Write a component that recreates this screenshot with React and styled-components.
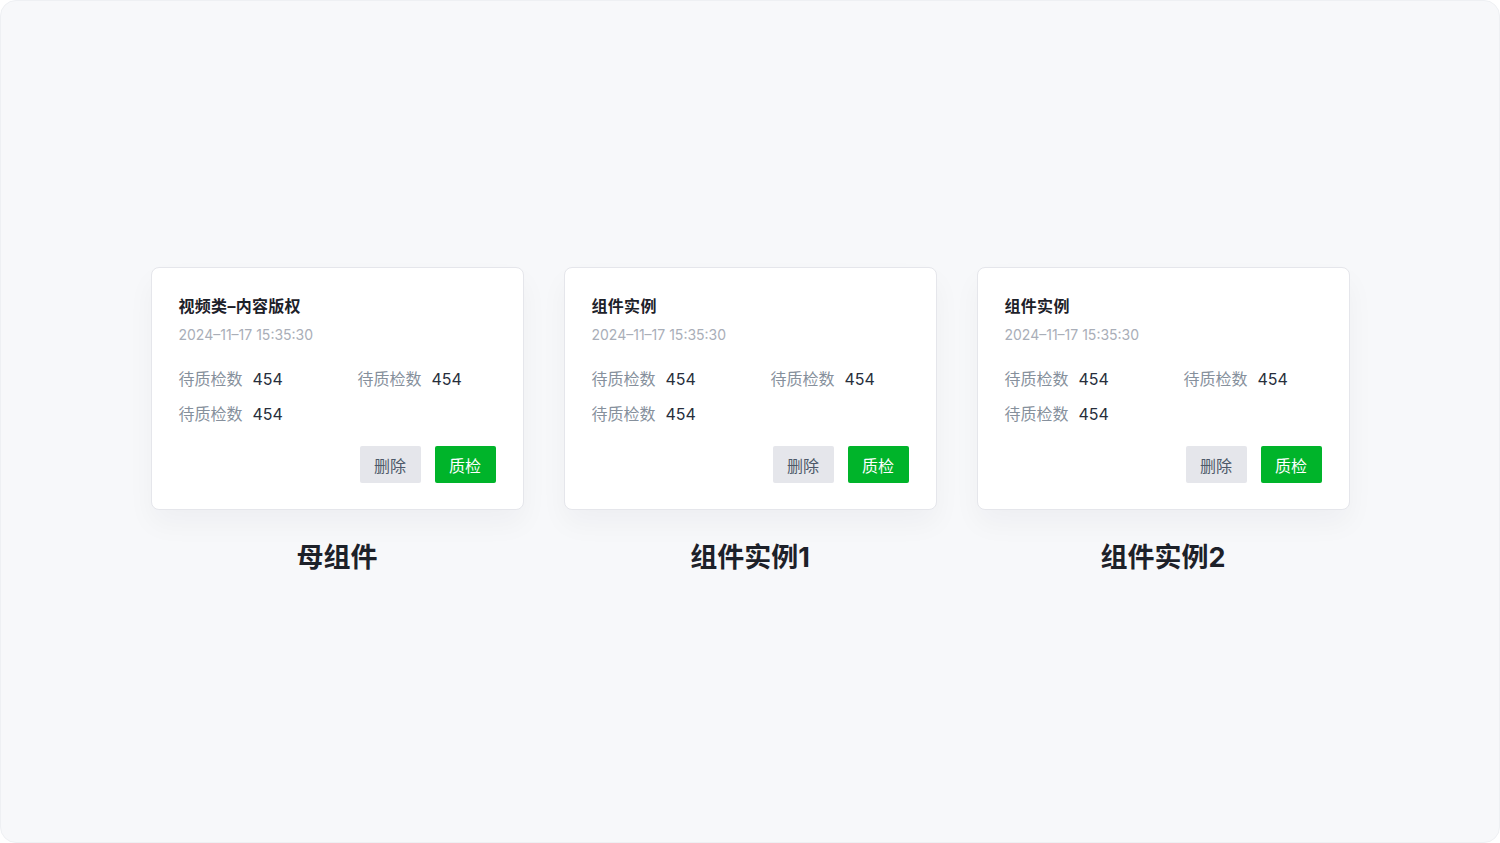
import React from 'react';
import styled, { createGlobalStyle } from 'styled-components';

const GlobalStyle = createGlobalStyle`
  html, body {
    margin: 0;
    padding: 0;
    background: #ffffff;
  }
  * {
    box-sizing: border-box;
  }
  body {
    font-family: "Inter", "Noto Sans CJK SC", sans-serif;
  }
`;

const Frame = styled.div`
  width: 1500px;
  height: 843px;
  background: #f7f8fa;
  border: 1px solid #eef0f3;
  border-radius: 16px;
  display: flex;
  justify-content: center;
  align-items: flex-start;
  gap: 40px;
  padding-top: 266px;
`;

const Column = styled.div`
  display: flex;
  flex-direction: column;
  align-items: center;
`;

const Card = styled.div`
  width: 373px;
  background: #ffffff;
  border: 1px solid #e5e6eb;
  border-radius: 8px;
  padding: 26px 27px 26px 27px;
  box-shadow: 0 14px 28px rgba(29, 33, 41, 0.04);
  display: flex;
  flex-direction: column;
`;

const Title = styled.div`
  font-size: 16px;
  line-height: 24px;
  font-weight: 700;
  color: #1d2129;
  letter-spacing: 0.3px;
`;

const Time = styled.div`
  margin-top: 6px;
  font-size: 14px;
  line-height: 22px;
  color: #a9aeb8;
`;

const Stats = styled.div`
  margin-top: 21px;
  display: grid;
  grid-template-columns: 179px 1fr;
  row-gap: 11px;
`;

const Stat = styled.div`
  display: flex;
  align-items: center;
  gap: 10px;
  font-size: 16px;
  line-height: 24px;
`;

const StatLabel = styled.span`
  color: #86909c;
`;

const StatValue = styled.span`
  color: #272e3b;
`;

const Actions = styled.div`
  margin-top: 20px;
  display: flex;
  justify-content: flex-end;
  gap: 14px;
`;

const Button = styled.button`
  width: 61px;
  height: 37px;
  border: none;
  border-radius: 2px;
  font-family: inherit;
  font-size: 16px;
  padding: 0;
  cursor: pointer;
  background: ${(p) => (p.$primary ? '#00b42a' : '#e5e6eb')};
  color: ${(p) => (p.$primary ? '#ffffff' : '#4e5969')};
`;

const Caption = styled.div`
  margin-top: 30px;
  font-size: 27px;
  line-height: 36px;
  font-weight: 700;
  color: #1d2129;
`;

const cards = [
  { title: '视频类–内容版权', caption: '母组件' },
  { title: '组件实例', caption: '组件实例1' },
  { title: '组件实例', caption: '组件实例2' },
];

const stats = ['待质检数', '待质检数', '待质检数'];

const TaskCard = ({ title }) => (
  <Card>
    <Title>{title}</Title>
    <Time>2024–11–17 15:35:30</Time>
    <Stats>
      {stats.map((label, i) => (
        <Stat key={i}>
          <StatLabel>{label}</StatLabel>
          <StatValue>454</StatValue>
        </Stat>
      ))}
    </Stats>
    <Actions>
      <Button>删除</Button>
      <Button $primary>质检</Button>
    </Actions>
  </Card>
);

export default function App() {
  return (
    <>
      <GlobalStyle />
      <Frame>
        {cards.map((c, i) => (
          <Column key={i}>
            <TaskCard title={c.title} />
            <Caption>{c.caption}</Caption>
          </Column>
        ))}
      </Frame>
    </>
  );
}
